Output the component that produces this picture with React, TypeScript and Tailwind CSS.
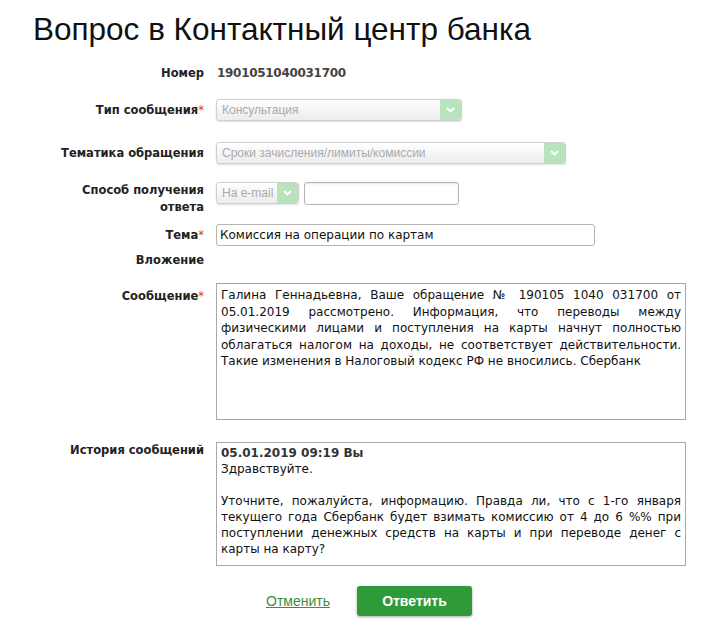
import React from "react";

const labelFont = { fontFamily: '"DejaVu Sans", Verdana, sans-serif' };

function Label({ children, required }: { children: React.ReactNode; required?: boolean }) {
  return (
    <div
      className="w-[204px] shrink-0 text-right text-[11.5px] font-bold leading-[17px] text-[#222]"
      style={labelFont}
    >
      {children}
      {required && <span className="font-normal text-[#d33]">*</span>}
    </div>
  );
}

function Arrow() {
  return (
    <div className="flex h-full w-[21px] shrink-0 items-center justify-center rounded-r-[3px] bg-[#b9e3bb]">
      <svg width="9" height="6" viewBox="0 0 9 6">
        <path d="M1 1 L4.5 4.5 L8 1" fill="none" stroke="#fff" strokeWidth="1.8" />
      </svg>
    </div>
  );
}

function Select({ value, width }: { value: string; width: string }) {
  return (
    <div
      className={`${width} flex h-[22px] items-center overflow-hidden rounded-[3px] border border-[#cfcfcf] bg-gradient-to-b from-white to-[#ececec] shadow-[0_1px_2px_rgba(0,0,0,0.12)]`}
    >
      <div
        className="flex-1 truncate pl-[5px] text-[12px] text-[#aaa]"
        style={{ fontFamily: '"Liberation Sans", Arial, sans-serif' }}
      >
        {value}
      </div>
      <Arrow />
    </div>
  );
}

export default function App() {
  return (
    <div className="min-h-[632px] w-[725px] bg-white" style={{ fontFamily: '"Liberation Sans", Arial, sans-serif' }}>
      <h1 className="pl-[33px] pt-[10px] text-[31.5px] leading-[38px] text-[#111]">
        Вопрос в Контактный центр банка
      </h1>

      <div className="mt-[16px] flex items-center gap-[13px]">
        <Label>Номер</Label>
        <div className="text-[12px] font-bold text-[#444]" style={labelFont}>
          <span className="tracking-[-0.3px]">1901051040031700</span>
        </div>
      </div>

      <div className="mt-[17px] flex items-center gap-[12px]">
        <Label required>Тип сообщения</Label>
        <Select value="Консультация" width="w-[246px]" />
      </div>

      <div className="mt-[21px] flex items-center gap-[12px]">
        <Label>Тематика обращения</Label>
        <Select value="Сроки зачисления/лимиты/комиссии" width="w-[350px]" />
      </div>

      <div className="mt-[18px] flex items-start gap-[12px]">
        <Label>
          Способ получения
          <br />
          ответа
        </Label>
        <div className="flex gap-[5px]">
          <Select value="На e-mail" width="w-[83px]" />
          <div className="h-[23px] w-[155px] rounded-[3px] border border-[#b5b5b5] bg-white shadow-[inset_0_1px_2px_rgba(0,0,0,0.1)]" />
        </div>
      </div>

      <div className="mt-[8px] flex items-center gap-[12px]">
        <Label required>Тема</Label>
        <div
          className="flex h-[22px] w-[379px] items-center rounded-[3px] border border-[#b5b5b5] pl-[3px] text-[12px] text-[#111]"
          style={labelFont}
        >
          Комиссия на операции по картам
        </div>
      </div>

      <div className="mt-[6px] flex items-center gap-[12px]">
        <Label>Вложение</Label>
      </div>

      <div className="mt-[14px] flex items-start gap-[12px]">
        <div className="pt-[5px]">
          <Label required>Сообщение</Label>
        </div>
        <div
          className="h-[137px] w-[470px] border border-[#a8a8a8] px-[4px] pt-[3px] text-justify text-[12px] leading-[16.5px] text-[#111]"
          style={labelFont}
        >
          Галина Геннадьевна, Ваше обращение № 190105 1040 031700 от 05.01.2019 рассмотрено.
          Информация, что переводы между физическими лицами и поступления на карты начнут полностью
          облагаться налогом на доходы, не соответствует действительности. Такие изменения в
          Налоговый кодекс РФ не вносились. Сбербанк
        </div>
      </div>

      <div className="mt-[22px] flex items-start gap-[12px]">
        <Label>История сообщений</Label>
        <div
          className="h-[124px] w-[470px] border border-[#a8a8a8] px-[4px] pt-[2px] text-justify text-[12px] leading-[16px] text-[#111]"
          style={labelFont}
        >
          <div className="font-bold text-[#333]">05.01.2019 09:19 Вы</div>
          <div>Здравствуйте.</div>
          <div className="mt-[16px]">
            Уточните, пожалуйста, информацию. Правда ли, что с 1-го января текущего года Сбербанк
            будет взимать комиссию от 4 до 6 %% при поступлении денежных средств на карты и при
            переводе денег с карты на карту?
          </div>
        </div>
      </div>

      <div className="mt-[20px] flex items-center pl-[266px]">
        <a href="#" className="text-[14px] text-[#3a8f3a] underline">
          Отменить
        </a>
        <button className="ml-[27px] h-[30px] w-[115px] rounded-[3px] bg-[#2f9b38] text-[14px] font-bold text-white shadow-[0_1px_3px_rgba(0,0,0,0.35)]">
          Ответить
        </button>
      </div>
    </div>
  );
}
